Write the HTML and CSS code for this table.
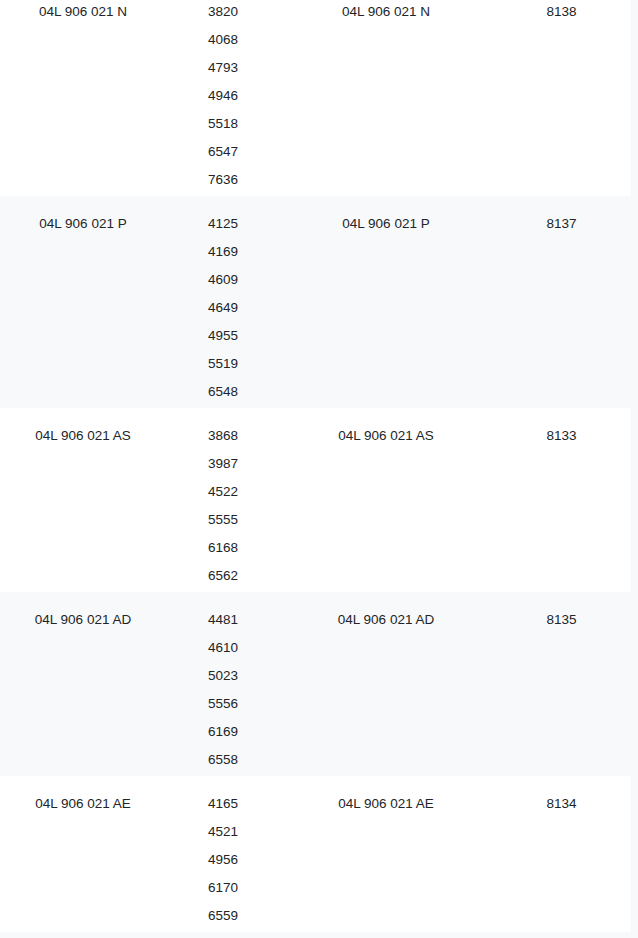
FILE: index.html
```html
<!DOCTYPE html>
<html lang="de">
<head>
<meta charset="utf-8">
<title>Teilenummern</title>
<link rel="stylesheet" href="styles.css">
</head>
<body>
<table class="parts">
  <colgroup>
    <col class="c1"><col class="c2"><col class="c3"><col class="c4">
  </colgroup>
  <tbody>
    <tr class="row">
      <td>04L 906 021 N</td>
      <td><div>3820</div><div>4068</div><div>4793</div><div>4946</div><div>5518</div><div>6547</div><div>7636</div></td>
      <td>04L 906 021 N</td>
      <td>8138</td>
    </tr>
    <tr class="row alt">
      <td>04L 906 021 P</td>
      <td><div>4125</div><div>4169</div><div>4609</div><div>4649</div><div>4955</div><div>5519</div><div>6548</div></td>
      <td>04L 906 021 P</td>
      <td>8137</td>
    </tr>
    <tr class="row">
      <td>04L 906 021 AS</td>
      <td><div>3868</div><div>3987</div><div>4522</div><div>5555</div><div>6168</div><div>6562</div></td>
      <td>04L 906 021 AS</td>
      <td>8133</td>
    </tr>
    <tr class="row alt">
      <td>04L 906 021 AD</td>
      <td><div>4481</div><div>4610</div><div>5023</div><div>5556</div><div>6169</div><div>6558</div></td>
      <td>04L 906 021 AD</td>
      <td>8135</td>
    </tr>
    <tr class="row">
      <td>04L 906 021 AE</td>
      <td><div>4165</div><div>4521</div><div>4956</div><div>6170</div><div>6559</div></td>
      <td>04L 906 021 AE</td>
      <td>8134</td>
    </tr>
  </tbody>
</table>
</body>
</html>
```
FILE: styles.css
```css
html, body {
  margin: 0;
  padding: 0;
}
body {
  background: #f8f9fa;
  font-family: "Liberation Sans", Arial, sans-serif;
  font-size: 13.5px;
  color: #212529;
}
.parts {
  border-collapse: collapse;
  table-layout: fixed;
  width: 631px;
  margin-top: -16px;
}
.c1 { width: 166px; }
.c2 { width: 114px; }
.c3 { width: 212px; }
.c4 { width: 139px; }
.row {
  background: #ffffff;
}
.row.alt {
  background: #f8f9fa;
}
.row td {
  vertical-align: top;
  text-align: center;
  padding: 14px 0 2px;
  line-height: 28px;
  white-space: nowrap;
}
```
